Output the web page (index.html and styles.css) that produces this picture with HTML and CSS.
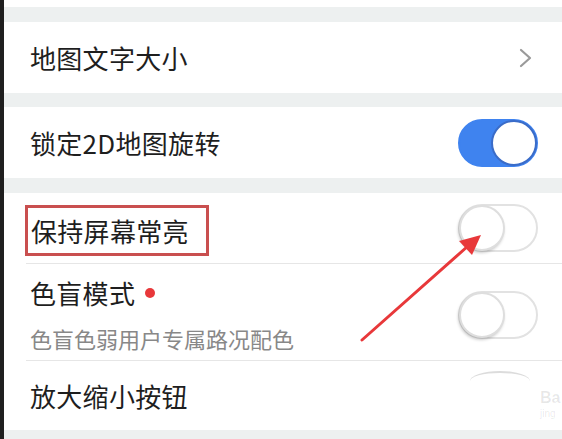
FILE: index.html
```html
<!DOCTYPE html>
<html>
<head>
    <meta charset="utf-8">
    <meta name="viewport" content="width=device-width, initial-scale=1.0">
    <title>设置</title>
    <link rel="stylesheet" href="styles.css">
</head>
<body>
    <div class="page">
        <div class="edge"></div>

        <div class="screen">
            <div class="tail"></div>
            <div class="gap"></div>

            <div class="row">
                <span class="title">地图文字大小</span>
                <svg class="chevron" width="14" height="20" viewBox="0 0 14 20">
                    <path d="M2 2 L11 10 L2 18" fill="none" stroke="#9a9a9a" stroke-width="2.2" stroke-linecap="round" stroke-linejoin="round"/>
                </svg>
            </div>

            <div class="gap gap-thin"></div>

            <div class="row">
                <span class="title">锁定2D地图旋转</span>
                <div class="switch switch-on"><div class="knob"></div></div>
            </div>

            <div class="gap"></div>

            <div class="row row-short">
                <span class="title marked">保持屏幕常亮</span>
                <div class="switch"><div class="knob"></div></div>
            </div>

            <div class="divider"></div>

            <div class="row row-tall">
                <div class="text-block">
                    <div class="title">色盲模式<span class="dot"></span></div>
                    <div class="subtitle">色盲色弱用户专属路况配色</div>
                </div>
                <div class="switch switch-low"><div class="knob"></div></div>
            </div>

            <div class="divider"></div>

            <div class="row row-last">
                <span class="title">放大缩小按钮</span>
                <div class="switch-edge"></div>
            </div>

            <div class="gap"></div>
        </div>
    </div>

    <svg class="arrow" width="562" height="439" viewBox="0 0 562 439">
        <line x1="362" y1="340" x2="468" y2="246" stroke="#e8383a" stroke-width="3" stroke-linecap="round"/>
        <polygon points="481,235 459,241 472,255" fill="#e8383a"/>
    </svg>

    <div class="watermark">
        <span class="wm-big">Ba</span>
        <span class="wm-small">jing</span>
    </div>
</body>
</html>
```

FILE: styles.css
```css
body {
    margin: 0;
    width: 562px;
    height: 439px;
    overflow: hidden;
    position: relative;
    background: #ffffff;
    font-family: "Noto Sans CJK SC", "Noto Sans", sans-serif;
    color: #222;
}

.page {
    display: flex;
    height: 439px;
}

.edge {
    width: 4px;
    background: #1f1f1f;
}

.screen {
    flex: 1;
    display: flex;
    flex-direction: column;
    overflow: hidden;
    background: #ffffff;
}

.screen > div {
    flex-shrink: 0;
}

.tail {
    height: 7px;
}

.gap {
    height: 15px;
    background: #edf0f0;
}

.gap-thin {
    height: 14px;
}

.row {
    height: 71px;
    display: flex;
    align-items: center;
    justify-content: space-between;
    padding: 0 24px 0 26px;
}

.row-short {
    height: 70px;
}

.title {
    font-size: 26px;
    line-height: 34px;
    letter-spacing: 0.3px;
    color: #1e1e1e;
    display: flex;
    align-items: center;
}

.marked {
    display: inline-block;
    border: 3px solid #c94f4f;
    line-height: 45px;
    padding: 0 17px 0 3px;
    margin: 5px 0 0 -5px;
}

.chevron {
    margin-right: 5px;
}

.switch {
    width: 80px;
    height: 48px;
    box-sizing: border-box;
    border-radius: 24px;
    border: 2px solid #e2e2e2;
    background: #ffffff;
    position: relative;
}

.switch .knob {
    position: absolute;
    top: -1px;
    left: -1px;
    width: 46px;
    height: 46px;
    box-sizing: border-box;
    border-radius: 50%;
    background: #ffffff;
    border: 2px solid #dedede;
    box-shadow: -1px 2px 3px rgba(0, 0, 0, 0.2);
}

.switch-on {
    background: #3f83ef;
    border-color: #3f83ef;
}

.switch-on .knob {
    left: auto;
    right: -1px;
    border-color: #3a6cc8;
    box-shadow: none;
}

.switch-low {
    margin-top: 5px;
}

.divider {
    height: 1px;
    background: #e6e6e6;
    margin-left: 22px;
}

.row-tall {
    height: 96px;
}

.text-block {
    display: flex;
    flex-direction: column;
    gap: 13px;
    padding-top: 5px;
}

.dot {
    display: inline-block;
    width: 10px;
    height: 10px;
    border-radius: 50%;
    background: #e8383a;
    margin-left: 10px;
}

.subtitle {
    font-size: 22px;
    line-height: 30px;
    color: #888;
}

.row-last {
    height: 69px;
    position: relative;
}

.switch-edge {
    position: absolute;
    top: 10px;
    right: 32px;
    width: 60px;
    height: 8px;
    border-top: 2px solid #dcdcdc;
    border-radius: 50% 50% 0 0 / 100% 100% 0 0;
}

.arrow {
    position: absolute;
    left: 0;
    top: 0;
    pointer-events: none;
}

.watermark {
    position: absolute;
    left: 540px;
    top: 388px;
    display: flex;
    flex-direction: column;
    font-family: "Liberation Sans", sans-serif;
    color: rgba(0, 0, 0, 0.09);
}

.wm-big {
    font-size: 16px;
    font-weight: 700;
    line-height: 20px;
}

.wm-small {
    font-size: 10px;
    line-height: 12px;
}
```
